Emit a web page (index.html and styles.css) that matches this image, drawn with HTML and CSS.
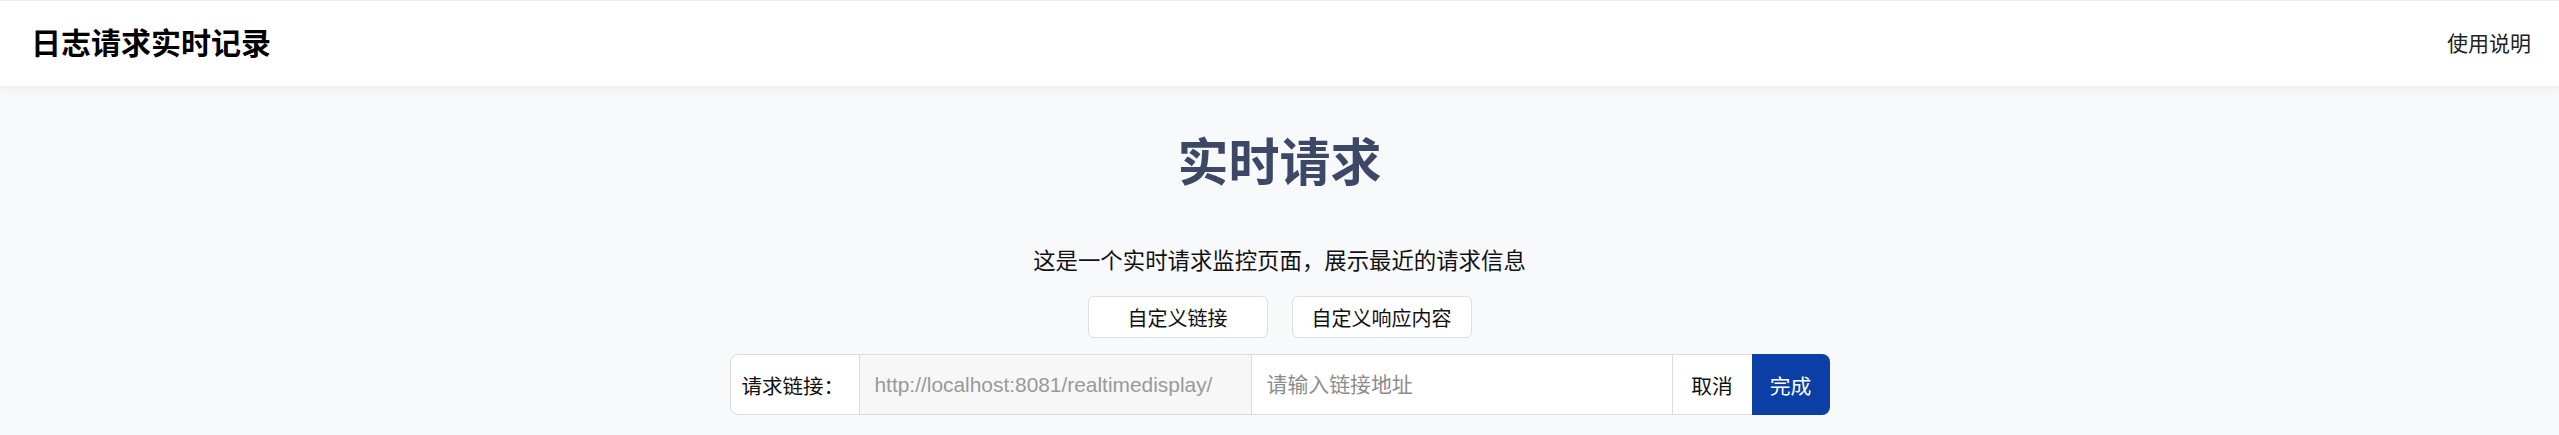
FILE: index.html
```html
<!DOCTYPE html>
<html lang="zh-CN">
<head>
  <meta charset="UTF-8" />
  <meta name="viewport" content="width=device-width, initial-scale=1.0"/>
  <title>日志请求实时记录</title>
  <link rel="stylesheet" href="styles.css">
</head>
<body>
  <header class="topbar">
    <h1 class="brand">日志请求实时记录</h1>
    <a class="help-link" href="#">使用说明</a>
  </header>

  <main class="container">
    <h2 class="page-title">实时请求</h2>
    <p class="page-desc">这是一个实时请求监控页面，展示最近的请求信息</p>

    <div class="tabs">
      <button class="tab-btn">自定义链接</button>
      <button class="tab-btn">自定义响应内容</button>
    </div>

    <div class="link-group">
      <span class="link-label">请求链接：</span>
      <input class="link-base" type="text" value="http://localhost:8081/realtimedisplay/" readonly />
      <input class="link-path" type="text" placeholder="请输入链接地址" />
      <button class="btn-cancel">取消</button>
      <button class="btn-done">完成</button>
    </div>
  </main>
</body>
</html>
```

FILE: styles.css
```css
body {
  font-family: "Liberation Sans", "Noto Sans CJK SC", sans-serif;
  margin: 0;
  padding: 0;
  background-color: #f8f9fb;
  color: #111;
}

.topbar {
  display: flex;
  justify-content: space-between;
  align-items: center;
  height: 85px;
  padding: 0 28px 0 31px;
  background: #fff;
  border-top: 1px solid #ececec;
  box-shadow: 0 2px 12px rgba(0, 0, 0, 0.07);
}

.brand {
  margin: 0;
  font-size: 30px;
  font-weight: 700;
  line-height: 1;
  color: #000;
}

.help-link {
  font-size: 21px;
  line-height: 1;
  color: #222;
  text-decoration: none;
}

.container {
  display: flex;
  flex-direction: column;
  align-items: center;
  padding-top: 52px;
}

.page-title {
  margin: 0;
  font-size: 51px;
  font-weight: 700;
  line-height: 1;
  color: #3d4866;
}

.page-desc {
  margin: 62px 0 0;
  font-size: 22.4px;
  line-height: 1;
  color: #111;
}

.tabs {
  display: flex;
  gap: 24px;
  margin-top: 23px;
}

.tab-btn {
  width: 180px;
  height: 42px;
  font-family: inherit;
  font-size: 20px;
  color: #111;
  background: #fff;
  border: 1px solid #dedede;
  border-radius: 6px;
  cursor: pointer;
}

.link-group {
  display: flex;
  width: 1100px;
  height: 61px;
  margin-top: 16px;
  box-sizing: border-box;
  border: 1px solid #dcdcdc;
  border-radius: 8px;
  background: #fff;
}

.link-label {
  display: flex;
  align-items: center;
  width: 129px;
  box-sizing: border-box;
  padding-left: 11px;
  font-size: 20.5px;
  color: #111;
  border-right: 1px solid #dcdcdc;
}

.link-group input {
  height: 100%;
  box-sizing: border-box;
  padding: 0 15px;
  border: none;
  outline: none;
  font-family: inherit;
  font-size: 20.9px;
}

.link-base {
  width: 392px;
  background: #f7f7f7;
  color: #999;
  border-right: 1px solid #dcdcdc !important;
}

.link-path {
  flex: 1;
  min-width: 0;
  background: #fff;
  border-right: 1px solid #dcdcdc !important;
}

.link-path::placeholder {
  color: #8c8c8c;
}

.btn-cancel,
.btn-done {
  padding: 0 18px;
  border: none;
  font-family: inherit;
  font-size: 20.8px;
  cursor: pointer;
}

.btn-cancel {
  width: 79px;
  background: #fff;
  color: #111;
}

.btn-done {
  width: 78px;
  margin: -1px -1px -1px 0;
  background: #0b3fa6;
  color: #fff;
  border-radius: 0 8px 8px 0;
}
```
